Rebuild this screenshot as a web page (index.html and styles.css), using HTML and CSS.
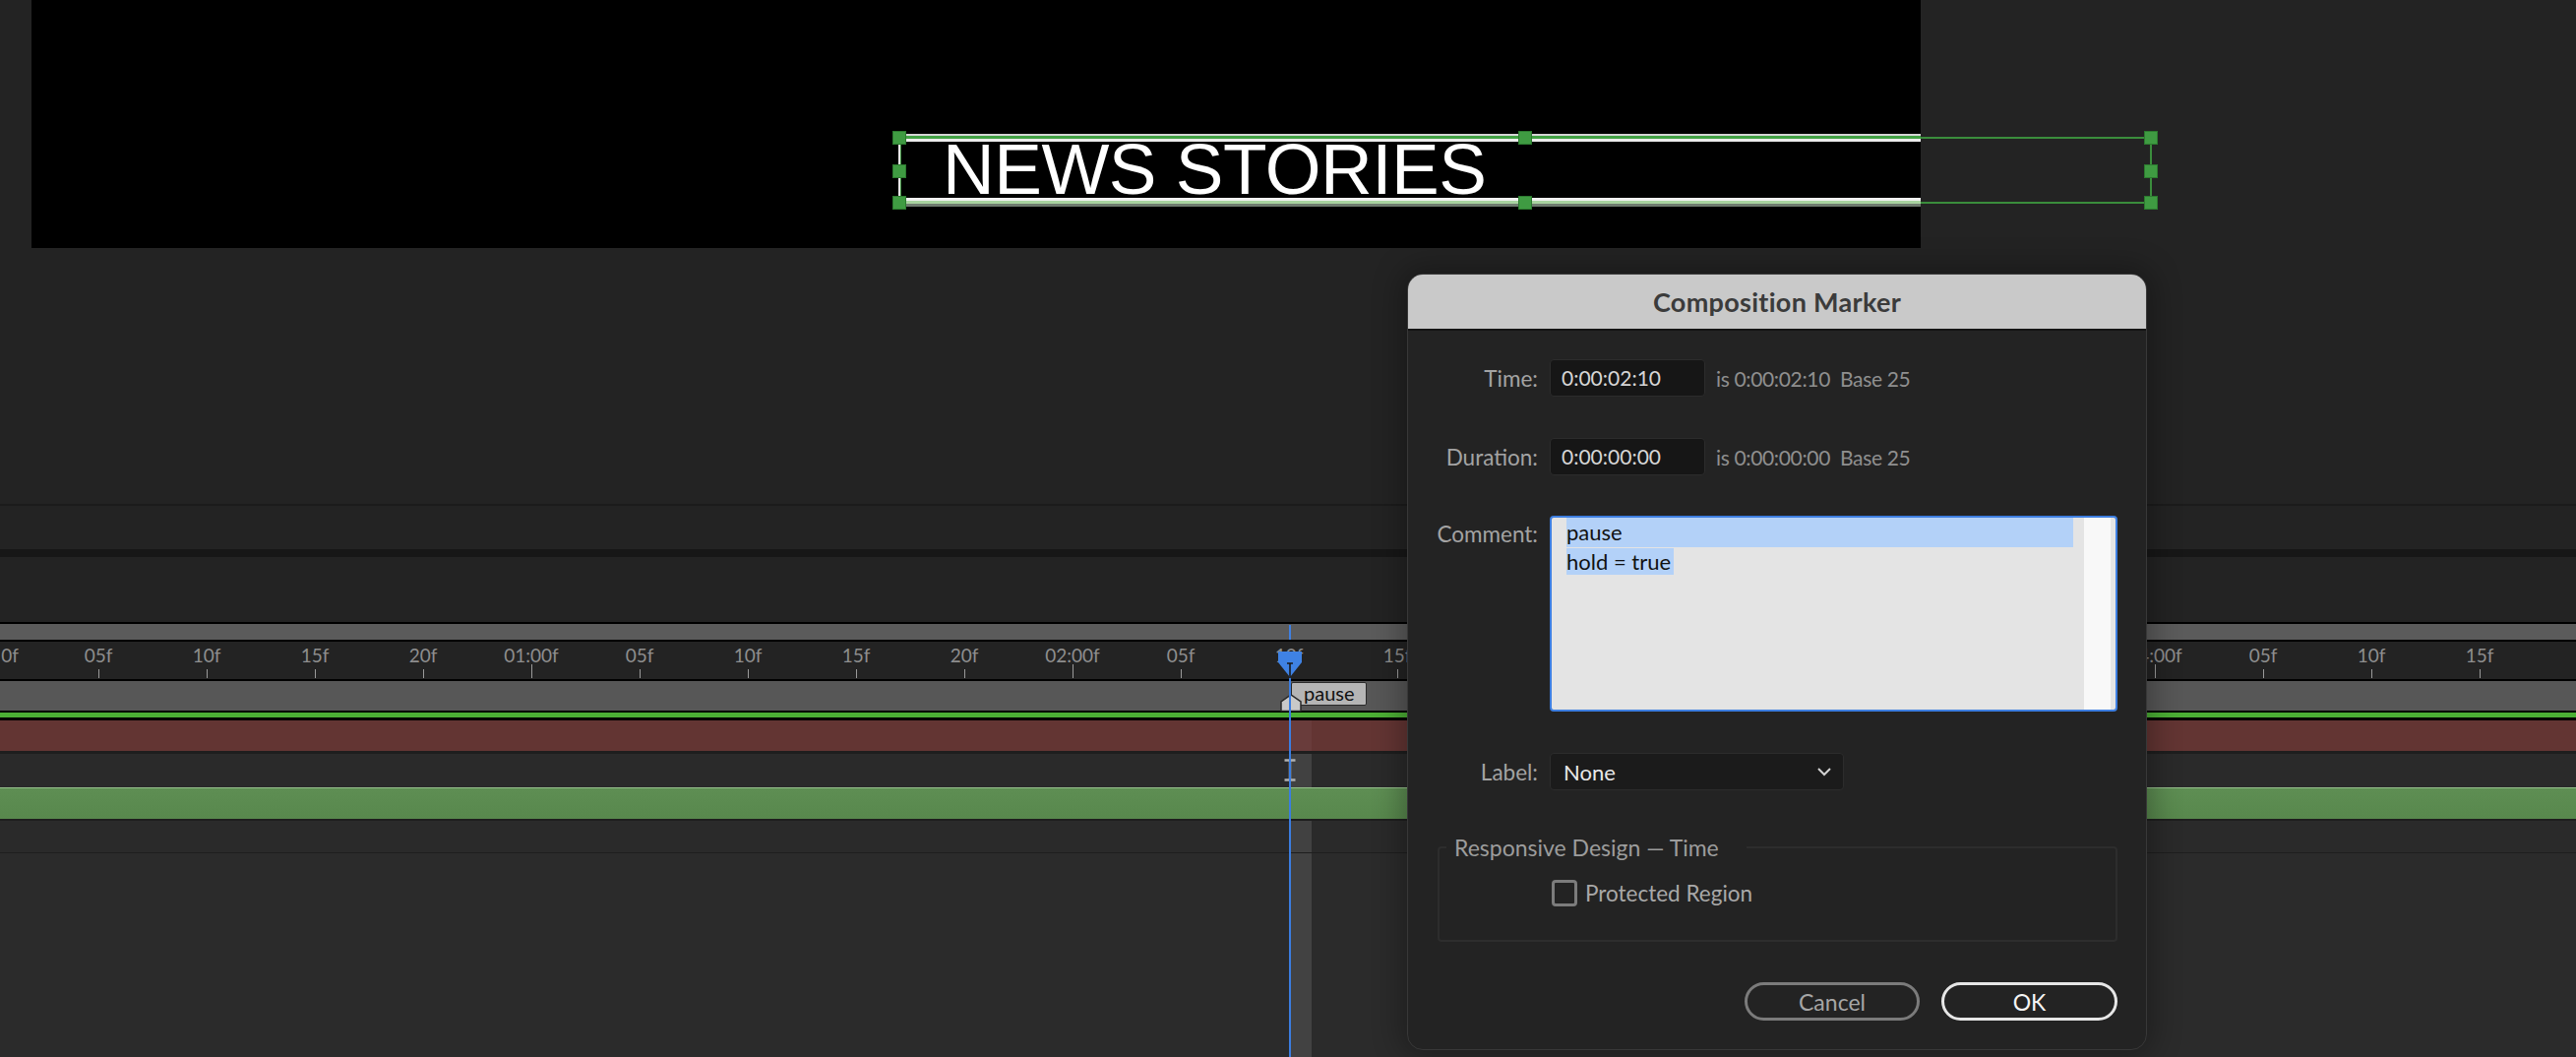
FILE: index.html
```html
<!DOCTYPE html>
<html lang="en">
<head>
<meta charset="utf-8">
<title>Composition Marker</title>
<link rel="stylesheet" href="styles.css">
</head>
<body>
<div class="app">
  <section class="viewer">
    <div class="preview"></div>
    <div class="layer-box">
      <div class="band band-top"></div>
      <div class="band band-bottom"></div>
      <div class="gline gline-top"></div>
      <div class="gline gline-bottom"></div>
      <div class="edge edge-left"></div>
      <div class="edge edge-right"></div>
      <div class="layer-text">NEWS STORIES</div>
      <span class="handle h-l h-t"></span>
      <span class="handle h-c h-t"></span>
      <span class="handle h-r h-t"></span>
      <span class="handle h-l h-m"></span>
      <span class="handle h-r h-m"></span>
      <span class="handle h-l h-b"></span>
      <span class="handle h-c h-b"></span>
      <span class="handle h-r h-b"></span>
    </div>
  </section>
  <div class="divider"></div>
  <div class="panel-a"></div>
  <div class="panel-sep"></div>
  <div class="panel-b"></div>
  <section class="timeline">
    <div class="tl-black"></div>
    <div class="nav-bar"></div>
    <div class="tl-black"></div>
    <div class="ruler">
      <div class="cell"><span class="tlabel first">0f</span><i class="tick"></i></div>
      <div class="cell"><span class="tlabel">05f</span><i class="tick"></i></div>
      <div class="cell"><span class="tlabel">10f</span><i class="tick"></i></div>
      <div class="cell"><span class="tlabel">15f</span><i class="tick"></i></div>
      <div class="cell"><span class="tlabel">20f</span><i class="tick"></i></div>
      <div class="cell"><span class="tlabel">01:00f</span><i class="tick major"></i></div>
      <div class="cell"><span class="tlabel">05f</span><i class="tick"></i></div>
      <div class="cell"><span class="tlabel">10f</span><i class="tick"></i></div>
      <div class="cell"><span class="tlabel">15f</span><i class="tick"></i></div>
      <div class="cell"><span class="tlabel">20f</span><i class="tick"></i></div>
      <div class="cell"><span class="tlabel">02:00f</span><i class="tick major"></i></div>
      <div class="cell"><span class="tlabel">05f</span><i class="tick"></i></div>
      <div class="cell"><span class="tlabel">10f</span><i class="tick"></i></div>
      <div class="cell"><span class="tlabel">15f</span><i class="tick"></i></div>
      <div class="cell"><span class="tlabel">20f</span><i class="tick"></i></div>
      <div class="cell"><span class="tlabel">03:00f</span><i class="tick major"></i></div>
      <div class="cell"><span class="tlabel">05f</span><i class="tick"></i></div>
      <div class="cell"><span class="tlabel">10f</span><i class="tick"></i></div>
      <div class="cell"><span class="tlabel">15f</span><i class="tick"></i></div>
      <div class="cell"><span class="tlabel">20f</span><i class="tick"></i></div>
      <div class="cell"><span class="tlabel">04:00f</span><i class="tick major"></i></div>
      <div class="cell"><span class="tlabel">05f</span><i class="tick"></i></div>
      <div class="cell"><span class="tlabel">10f</span><i class="tick"></i></div>
      <div class="cell"><span class="tlabel">15f</span><i class="tick"></i></div>
    </div>
    <div class="tl-black"></div>
    <div class="marker-row"></div>
    <div class="work-area"></div>
    <div class="track-red"></div>
    <div class="sep sep3"></div>
    <div class="row-empty"></div>
    <div class="track-green"></div>
    <div class="sep sep2"></div>
    <div class="row-empty row-short"></div>
    <div class="sep sep1"></div>
    <div class="rest"></div>

    <div class="strip"></div>
    <div class="strip-red"></div>
    <div class="nav-tick"></div>
    <div class="pause-label">pause</div>
    <svg class="marker" width="22" height="18" viewBox="0 0 22 18"><polygon points="1,17.5 1,8 11,1 21,8 21,17.5" fill="#c9c9c9" stroke="#2a2a2a" stroke-width="1.5"/></svg>
    <svg class="ibeam" width="16" height="23" viewBox="0 0 16 23"><path d="M2.5 1.5h11M8 1.5v20M2.5 21.5h11" stroke="#b0b0b0" stroke-width="2.5" fill="none"/></svg>
    <div class="play-line"></div>
    <svg class="play-head" width="24" height="27" viewBox="0 0 24 27"><polygon points="0,0 24,0 24,11 12,26 0,11" fill="#3f82e4"/><path d="M9 12h6M12 12v15" stroke="#1a1a1a" stroke-width="1.6" fill="none"/></svg>
  </section>

  <div class="dialog">
    <header class="dlg-head">Composition Marker</header>
    <div class="dlg-body">
      <div class="frow row-time">
        <span class="flabel">Time:</span>
        <span class="fbox">0:00:02:10</span>
        <span class="finfo">is 0:00:02:10&nbsp; Base 25</span>
      </div>
      <div class="frow row-dur">
        <span class="flabel">Duration:</span>
        <span class="fbox">0:00:00:00</span>
        <span class="finfo">is 0:00:00:00&nbsp; Base 25</span>
      </div>
      <div class="frow row-comment">
        <span class="flabel comment-label">Comment:</span>
        <div class="comment-box">
          <div class="comment-text">
            <div class="sel-line">pause</div>
            <div><span class="sel">hold = true</span></div>
          </div>
          <div class="scrollbar"></div>
        </div>
      </div>
      <div class="frow row-label">
        <span class="flabel">Label:</span>
        <div class="select">
          <span>None</span>
          <svg width="16" height="10" viewBox="0 0 16 10"><polyline points="2,2 8,8 14,2" fill="none" stroke="#d2d2d2" stroke-width="2"/></svg>
        </div>
      </div>
      <fieldset class="group">
        <legend>Responsive Design — Time</legend>
        <div class="check-row">
          <span class="checkbox"></span>
          <span class="check-text">Protected Region</span>
        </div>
      </fieldset>
      <div class="buttons">
        <button class="btn btn-cancel">Cancel</button>
        <button class="btn btn-ok">OK</button>
      </div>
    </div>
  </div>
</div>
</body>
</html>
```

FILE: styles.css
```css
* { box-sizing: border-box; }
html, body { margin: 0; padding: 0; }
body {
  width: 2618px;
  height: 1074px;
  overflow: hidden;
  background: #232323;
  font-family: "Lato", "Open Sans", sans-serif;
}
.app {
  position: relative;
  width: 2618px;
  height: 1074px;
  display: flex;
  flex-direction: column;
}

/* ---------- viewer ---------- */
.viewer {
  position: relative;
  height: 512px;
  flex-shrink: 0;
  background: #232323;
}
.preview {
  margin-left: 32px;
  width: 1920px;
  height: 252px;
  background: #000;
}
.layer-box {
  position: absolute;
  left: 914px;
  top: 140px;
  width: 1272px;
  height: 66px;
}
.band { position: absolute; left: 0; width: 1038px; }
.band-top {
  top: -4px;
  height: 8px;
  background: linear-gradient(#d6d6d6 0 2px, #43a245 2px 5px, #ececec 5px 8px);
}
.band-bottom {
  top: 61px;
  height: 9px;
  background: linear-gradient(#f0f0f0 0 3px, #a8d3a0 3px 6px, #6f7c6f 6px 9px);
}
.gline { position: absolute; left: 1038px; right: 0; height: 2px; background: #3a8d3c; }
.gline-top { top: -1px; }
.gline-bottom { top: 65px; }
.edge { position: absolute; top: 0; height: 66px; }
.edge-left { left: -1px; width: 3px; background: #e8e8e8; border-right: 1px solid #3a8d3c; }
.edge-right { left: 1271px; width: 2px; background: #3a8d3c; }
.layer-text {
  position: absolute;
  left: 44px;
  top: -5px;
  font-family: "Liberation Sans", Arial, sans-serif;
  font-size: 73px;
  line-height: 73px;
  letter-spacing: -0.5px;
  color: #fff;
  white-space: nowrap;
}
.handle {
  position: absolute;
  width: 14px;
  height: 14px;
  background: #3f9b42;
  border: 1px solid #2c7a2f;
}
.h-l { left: -7px; }
.h-c { left: 629px; }
.h-r { left: 1265px; }
.h-t { top: -7px; }
.h-m { top: 27px; }
.h-b { top: 59px; }

/* ---------- panels ---------- */
.divider { height: 2px; background: #1b1b1b; flex-shrink: 0; }
.panel-a { height: 44px; background: #232323; flex-shrink: 0; }
.panel-sep { height: 8px; background: #171717; flex-shrink: 0; }
.panel-b { height: 66px; background: #232323; flex-shrink: 0; }

/* ---------- timeline ---------- */
.timeline {
  position: relative;
  flex: 1;
  display: flex;
  flex-direction: column;
  overflow: hidden;
}
.tl-black { height: 2px; background: #000; flex-shrink: 0; }
.nav-bar { height: 16px; background: #5b5b5b; flex-shrink: 0; }
.ruler {
  height: 38px;
  flex-shrink: 0;
  background: #232323;
  display: flex;
  margin-left: -65px;
}
.cell {
  position: relative;
  width: 110px;
  flex-shrink: 0;
  display: flex;
  flex-direction: column;
  align-items: center;
}
.tlabel {
  display: block;
  width: 110px;
  text-align: center;
  padding-top: 4px;
  font-size: 19px;
  line-height: 19px;
  color: #8e8e8e;
  white-space: nowrap;
}
.tlabel.first { padding-left: 40px; }
.tick {
  display: block;
  width: 1px;
  height: 9px;
  margin-top: auto;
  margin-bottom: 1px;
  background: #9a9a9a;
  margin-left: 1px;
}
.tick.major { height: 14px; }
.marker-row { height: 30px; background: #575757; flex-shrink: 0; }
.work-area {
  height: 10px;
  flex-shrink: 0;
  background: linear-gradient(#000 0 2px, #4caf35 2px 7px, #000 7px 10px);
}
.track-red { height: 31px; background: #633533; flex-shrink: 0; }
.sep { background: #1e1e1e; flex-shrink: 0; position: relative; z-index: 1; }
.sep3 { height: 3px; }
.sep2 { height: 2px; }
.sep1 { height: 1px; }
.row-empty { height: 34px; background: #2a2a2a; flex-shrink: 0; }
.row-short { height: 32px; }
.track-green {
  height: 32px;
  flex-shrink: 0;
  position: relative;
  z-index: 1;
  background: linear-gradient(#97c28d 0 1px, #5e8e53 1px, #58884d 100%);
}
.rest { flex: 1; background: #2b2b2b; }

.strip {
  position: absolute;
  left: 1312px;
  width: 21px;
  top: 134px;
  bottom: 0;
  background: rgba(255,255,255,0.11);
}
.strip-red {
  position: absolute;
  left: 1312px;
  width: 21px;
  top: 100px;
  height: 31px;
  background: rgba(255,255,255,0.04);
}
.nav-tick {
  position: absolute;
  left: 1310px;
  top: 3px;
  width: 2px;
  height: 15px;
  background: #3f80e0;
}
.pause-label {
  position: absolute;
  left: 1312px;
  top: 61px;
  width: 77px;
  height: 24px;
  background: #b5b5b5;
  border: 1px solid #2a2a2a;
  border-radius: 2px;
  padding-left: 12px;
  font-size: 20px;
  line-height: 21px;
  color: #111;
}
.marker { position: absolute; left: 1301px; top: 73px; }
.ibeam { position: absolute; left: 1303px; top: 139px; z-index: 2; }
.play-line {
  position: absolute;
  left: 1310px;
  top: 56px;
  bottom: 0;
  width: 2px;
  background: #3b7de0;
  z-index: 2;
}
.play-head { position: absolute; left: 1299px; top: 30px; z-index: 2; }

/* ---------- dialog ---------- */
.dialog {
  position: absolute;
  z-index: 10;
  left: 1430px;
  top: 278px;
  width: 752px;
  height: 789px;
  background: #232323;
  border: 1px solid #383838;
  border-radius: 16px;
  overflow: hidden;
  box-shadow: 0 0 30px 6px rgba(0,0,0,0.3);
  display: flex;
  flex-direction: column;
}
.dlg-head {
  height: 57px;
  flex-shrink: 0;
  background: #c9c9c9;
  border-bottom: 2px solid #141414;
  text-align: center;
  font-weight: 700;
  font-size: 27px;
  letter-spacing: 0.3px;
  line-height: 55px;
  color: #3b3b3b;
}
.dlg-body {
  padding: 29px 29px 0 0;
  display: flex;
  flex-direction: column;
  font-size: 21px;
}
.frow { display: flex; align-items: center; }
.flabel {
  width: 132px;
  margin-right: 12px;
  text-align: right;
  color: #a3a3a3;
  flex-shrink: 0;
  white-space: nowrap;
  font-size: 22.5px;
}
.fbox {
  width: 158px;
  height: 38px;
  background: #161616;
  border: 1px solid #2c2c2c;
  border-radius: 4px;
  padding-left: 11px;
  line-height: 36px;
  color: #d6d6d6;
}
.finfo { margin-left: 11px; color: #8f8f8f; white-space: nowrap; letter-spacing: -0.35px; }
.row-dur { margin-top: 42px; }
.row-comment { margin-top: 41px; align-items: flex-start; }
.comment-label { padding-top: 4px; line-height: 30px; }
.comment-box {
  width: 577px;
  height: 199px;
  border: 2px solid #3d7ee0;
  border-radius: 4px;
  background: #e4e4e4;
  display: flex;
  overflow: hidden;
}
.comment-text {
  flex: 1;
  padding: 0 11px 0 15px;
  color: #111;
  font-size: 22px;
  line-height: 30px;
}
.sel-line { background: #b3d1f8; }
.sel { background: #b3d1f8; padding-right: 3px; }
.scrollbar {
  width: 27px;
  margin-right: 5px;
  background: #f8f8f8;
}
.row-label { margin-top: 42px; }
.select {
  width: 299px;
  height: 38px;
  background: #1b1b1b;
  border: 1px solid #2c2c2c;
  border-radius: 4px;
  padding: 0 11px 0 13px;
  display: flex;
  align-items: center;
  justify-content: space-between;
  color: #e8e8e8;
  font-size: 22px;
}
.group {
  margin: 45px 0 0 30px;
  padding: 0 0 34px 0;
  border: 2px solid #2d2d2d;
  border-radius: 4px;
  min-width: 0;
}
.group legend {
  margin-left: 7px;
  padding: 0 28px 0 8px;
  line-height: 26px;
  font-size: 23px;
  color: #9c9c9c;
}
.check-row {
  display: flex;
  align-items: center;
  margin: 20px 0 0 114px;
}
.checkbox {
  width: 26px;
  height: 27px;
  border: 3px solid #7c7c7c;
  border-radius: 4px;
  margin-right: 8px;
}
.check-text { color: #a8a8a8; font-size: 22.5px; }
.buttons {
  margin-top: 41px;
  display: flex;
  justify-content: flex-end;
  gap: 22px;
}
.btn {
  width: 178px;
  height: 39px;
  background: transparent;
  border: 3px solid;
  border-radius: 20px;
  font-family: "Lato", "Open Sans", sans-serif;
  font-size: 23px;
  padding: 0;
}
.btn-cancel { border-color: #7b7b7b; color: #a6a6a6; }
.btn-ok { width: 179px; border-color: #e6e6e6; color: #f4f4f4; }
```
